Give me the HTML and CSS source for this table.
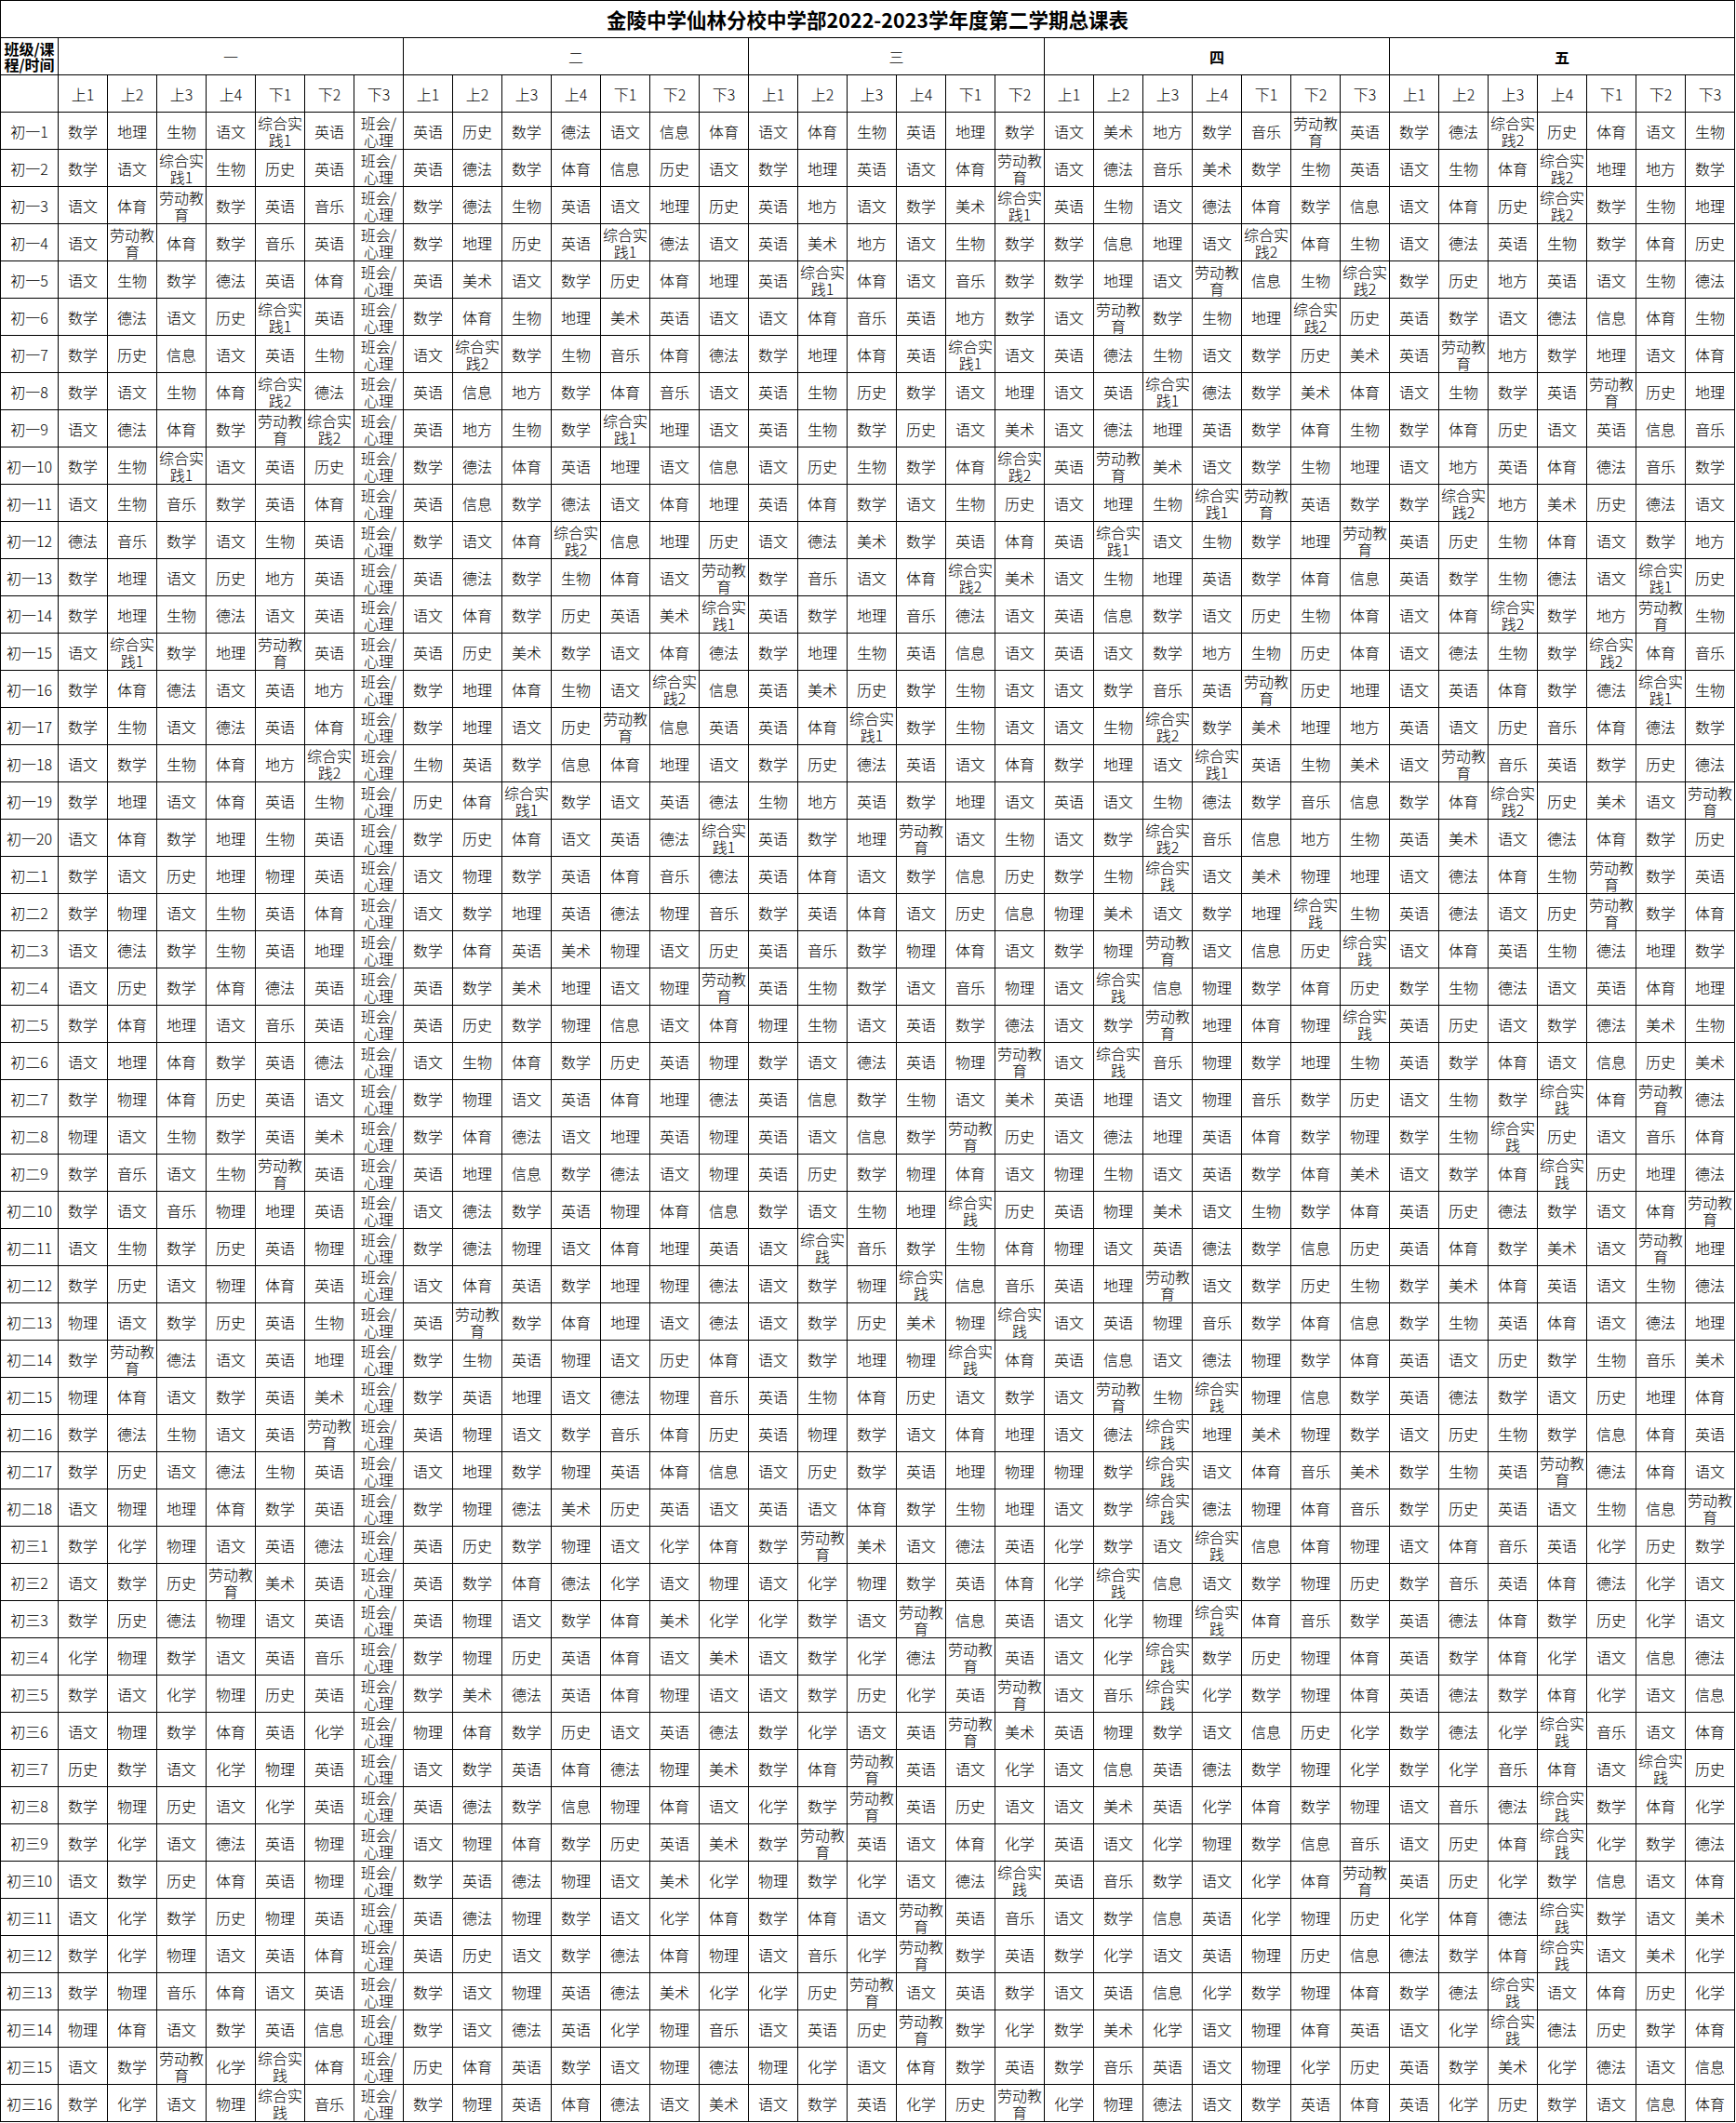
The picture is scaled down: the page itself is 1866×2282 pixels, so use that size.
FILE: index.html
```html
<!DOCTYPE html>
<html lang="zh-CN">
<head>
<meta charset="utf-8">
<title>金陵中学仙林分校中学部2022-2023学年度第二学期总课表</title>
<link rel="stylesheet" href="styles.css">
</head>
<body>
<table class="timetable">
<colgroup><col class="col-class"><col span="34" class="col-slot"></colgroup>
<tr><td colspan="35" class="title">金陵中学仙林分校中学部2022-2023学年度第二学期总课表</td></tr>
<tr><th class="corner">班级/课程/时间</th><th colspan="7" class="day">一</th><th colspan="7" class="day">二</th><th colspan="6" class="day">三</th><th colspan="7" class="day day-bold">四</th><th colspan="7" class="day day-bold">五</th></tr>
<tr><th></th><th>上1</th><th>上2</th><th>上3</th><th>上4</th><th>下1</th><th>下2</th><th>下3</th><th>上1</th><th>上2</th><th>上3</th><th>上4</th><th>下1</th><th>下2</th><th>下3</th><th>上1</th><th>上2</th><th>上3</th><th>上4</th><th>下1</th><th>下2</th><th>上1</th><th>上2</th><th>上3</th><th>上4</th><th>下1</th><th>下2</th><th>下3</th><th>上1</th><th>上2</th><th>上3</th><th>上4</th><th>下1</th><th>下2</th><th>下3</th></tr>
<tr><th>初一1</th><td>数学</td><td>地理</td><td>生物</td><td>语文</td><td>综合实践1</td><td>英语</td><td>班会/心理</td><td>英语</td><td>历史</td><td>数学</td><td>德法</td><td>语文</td><td>信息</td><td>体育</td><td>语文</td><td>体育</td><td>生物</td><td>英语</td><td>地理</td><td>数学</td><td>语文</td><td>美术</td><td>地方</td><td>数学</td><td>音乐</td><td>劳动教育</td><td>英语</td><td>数学</td><td>德法</td><td>综合实践2</td><td>历史</td><td>体育</td><td>语文</td><td>生物</td></tr>
<tr><th>初一2</th><td>数学</td><td>语文</td><td>综合实践1</td><td>生物</td><td>历史</td><td>英语</td><td>班会/心理</td><td>英语</td><td>德法</td><td>数学</td><td>体育</td><td>信息</td><td>历史</td><td>语文</td><td>数学</td><td>地理</td><td>英语</td><td>语文</td><td>体育</td><td>劳动教育</td><td>语文</td><td>德法</td><td>音乐</td><td>美术</td><td>数学</td><td>生物</td><td>英语</td><td>语文</td><td>生物</td><td>体育</td><td>综合实践2</td><td>地理</td><td>地方</td><td>数学</td></tr>
<tr><th>初一3</th><td>语文</td><td>体育</td><td>劳动教育</td><td>数学</td><td>英语</td><td>音乐</td><td>班会/心理</td><td>数学</td><td>德法</td><td>生物</td><td>英语</td><td>语文</td><td>地理</td><td>历史</td><td>英语</td><td>地方</td><td>语文</td><td>数学</td><td>美术</td><td>综合实践1</td><td>英语</td><td>生物</td><td>语文</td><td>德法</td><td>体育</td><td>数学</td><td>信息</td><td>语文</td><td>体育</td><td>历史</td><td>综合实践2</td><td>数学</td><td>生物</td><td>地理</td></tr>
<tr><th>初一4</th><td>语文</td><td>劳动教育</td><td>体育</td><td>数学</td><td>音乐</td><td>英语</td><td>班会/心理</td><td>数学</td><td>地理</td><td>历史</td><td>英语</td><td>综合实践1</td><td>德法</td><td>语文</td><td>英语</td><td>美术</td><td>地方</td><td>语文</td><td>生物</td><td>数学</td><td>数学</td><td>信息</td><td>地理</td><td>语文</td><td>综合实践2</td><td>体育</td><td>生物</td><td>语文</td><td>德法</td><td>英语</td><td>生物</td><td>数学</td><td>体育</td><td>历史</td></tr>
<tr><th>初一5</th><td>语文</td><td>生物</td><td>数学</td><td>德法</td><td>英语</td><td>体育</td><td>班会/心理</td><td>英语</td><td>美术</td><td>语文</td><td>数学</td><td>历史</td><td>体育</td><td>地理</td><td>英语</td><td>综合实践1</td><td>体育</td><td>语文</td><td>音乐</td><td>数学</td><td>数学</td><td>地理</td><td>语文</td><td>劳动教育</td><td>信息</td><td>生物</td><td>综合实践2</td><td>数学</td><td>历史</td><td>地方</td><td>英语</td><td>语文</td><td>生物</td><td>德法</td></tr>
<tr><th>初一6</th><td>数学</td><td>德法</td><td>语文</td><td>历史</td><td>综合实践1</td><td>英语</td><td>班会/心理</td><td>数学</td><td>体育</td><td>生物</td><td>地理</td><td>美术</td><td>英语</td><td>语文</td><td>语文</td><td>体育</td><td>音乐</td><td>英语</td><td>地方</td><td>数学</td><td>语文</td><td>劳动教育</td><td>数学</td><td>生物</td><td>地理</td><td>综合实践2</td><td>历史</td><td>英语</td><td>数学</td><td>语文</td><td>德法</td><td>信息</td><td>体育</td><td>生物</td></tr>
<tr><th>初一7</th><td>数学</td><td>历史</td><td>信息</td><td>语文</td><td>英语</td><td>生物</td><td>班会/心理</td><td>语文</td><td>综合实践2</td><td>数学</td><td>生物</td><td>音乐</td><td>体育</td><td>德法</td><td>数学</td><td>地理</td><td>体育</td><td>英语</td><td>综合实践1</td><td>语文</td><td>英语</td><td>德法</td><td>生物</td><td>语文</td><td>数学</td><td>历史</td><td>美术</td><td>英语</td><td>劳动教育</td><td>地方</td><td>数学</td><td>地理</td><td>语文</td><td>体育</td></tr>
<tr><th>初一8</th><td>数学</td><td>语文</td><td>生物</td><td>体育</td><td>综合实践2</td><td>德法</td><td>班会/心理</td><td>英语</td><td>信息</td><td>地方</td><td>数学</td><td>体育</td><td>音乐</td><td>语文</td><td>英语</td><td>生物</td><td>历史</td><td>数学</td><td>语文</td><td>地理</td><td>语文</td><td>英语</td><td>综合实践1</td><td>德法</td><td>数学</td><td>美术</td><td>体育</td><td>语文</td><td>生物</td><td>数学</td><td>英语</td><td>劳动教育</td><td>历史</td><td>地理</td></tr>
<tr><th>初一9</th><td>语文</td><td>德法</td><td>体育</td><td>数学</td><td>劳动教育</td><td>综合实践2</td><td>班会/心理</td><td>英语</td><td>地方</td><td>生物</td><td>数学</td><td>综合实践1</td><td>地理</td><td>语文</td><td>英语</td><td>生物</td><td>数学</td><td>历史</td><td>语文</td><td>美术</td><td>语文</td><td>德法</td><td>地理</td><td>英语</td><td>数学</td><td>体育</td><td>生物</td><td>数学</td><td>体育</td><td>历史</td><td>语文</td><td>英语</td><td>信息</td><td>音乐</td></tr>
<tr><th>初一10</th><td>数学</td><td>生物</td><td>综合实践1</td><td>语文</td><td>英语</td><td>历史</td><td>班会/心理</td><td>数学</td><td>德法</td><td>体育</td><td>英语</td><td>地理</td><td>语文</td><td>信息</td><td>语文</td><td>历史</td><td>生物</td><td>数学</td><td>体育</td><td>综合实践2</td><td>英语</td><td>劳动教育</td><td>美术</td><td>语文</td><td>数学</td><td>生物</td><td>地理</td><td>语文</td><td>地方</td><td>英语</td><td>体育</td><td>德法</td><td>音乐</td><td>数学</td></tr>
<tr><th>初一11</th><td>语文</td><td>生物</td><td>音乐</td><td>数学</td><td>英语</td><td>体育</td><td>班会/心理</td><td>英语</td><td>信息</td><td>数学</td><td>德法</td><td>语文</td><td>体育</td><td>地理</td><td>英语</td><td>体育</td><td>数学</td><td>语文</td><td>生物</td><td>历史</td><td>语文</td><td>地理</td><td>生物</td><td>综合实践1</td><td>劳动教育</td><td>英语</td><td>数学</td><td>数学</td><td>综合实践2</td><td>地方</td><td>美术</td><td>历史</td><td>德法</td><td>语文</td></tr>
<tr><th>初一12</th><td>德法</td><td>音乐</td><td>数学</td><td>语文</td><td>生物</td><td>英语</td><td>班会/心理</td><td>数学</td><td>语文</td><td>体育</td><td>综合实践2</td><td>信息</td><td>地理</td><td>历史</td><td>语文</td><td>德法</td><td>美术</td><td>数学</td><td>英语</td><td>体育</td><td>英语</td><td>综合实践1</td><td>语文</td><td>生物</td><td>数学</td><td>地理</td><td>劳动教育</td><td>英语</td><td>历史</td><td>生物</td><td>体育</td><td>语文</td><td>数学</td><td>地方</td></tr>
<tr><th>初一13</th><td>数学</td><td>地理</td><td>语文</td><td>历史</td><td>地方</td><td>英语</td><td>班会/心理</td><td>英语</td><td>德法</td><td>数学</td><td>生物</td><td>体育</td><td>语文</td><td>劳动教育</td><td>数学</td><td>音乐</td><td>语文</td><td>体育</td><td>综合实践2</td><td>美术</td><td>语文</td><td>生物</td><td>地理</td><td>英语</td><td>数学</td><td>体育</td><td>信息</td><td>英语</td><td>数学</td><td>生物</td><td>德法</td><td>语文</td><td>综合实践1</td><td>历史</td></tr>
<tr><th>初一14</th><td>数学</td><td>地理</td><td>生物</td><td>德法</td><td>语文</td><td>英语</td><td>班会/心理</td><td>语文</td><td>体育</td><td>数学</td><td>历史</td><td>英语</td><td>美术</td><td>综合实践1</td><td>英语</td><td>数学</td><td>地理</td><td>音乐</td><td>德法</td><td>语文</td><td>英语</td><td>信息</td><td>数学</td><td>语文</td><td>历史</td><td>生物</td><td>体育</td><td>语文</td><td>体育</td><td>综合实践2</td><td>数学</td><td>地方</td><td>劳动教育</td><td>生物</td></tr>
<tr><th>初一15</th><td>语文</td><td>综合实践1</td><td>数学</td><td>地理</td><td>劳动教育</td><td>英语</td><td>班会/心理</td><td>英语</td><td>历史</td><td>美术</td><td>数学</td><td>语文</td><td>体育</td><td>德法</td><td>数学</td><td>地理</td><td>生物</td><td>英语</td><td>信息</td><td>语文</td><td>英语</td><td>语文</td><td>数学</td><td>地方</td><td>生物</td><td>历史</td><td>体育</td><td>语文</td><td>德法</td><td>生物</td><td>数学</td><td>综合实践2</td><td>体育</td><td>音乐</td></tr>
<tr><th>初一16</th><td>数学</td><td>体育</td><td>德法</td><td>语文</td><td>英语</td><td>地方</td><td>班会/心理</td><td>数学</td><td>地理</td><td>体育</td><td>生物</td><td>语文</td><td>综合实践2</td><td>信息</td><td>英语</td><td>美术</td><td>历史</td><td>数学</td><td>生物</td><td>语文</td><td>语文</td><td>数学</td><td>音乐</td><td>英语</td><td>劳动教育</td><td>历史</td><td>地理</td><td>语文</td><td>英语</td><td>体育</td><td>数学</td><td>德法</td><td>综合实践1</td><td>生物</td></tr>
<tr><th>初一17</th><td>数学</td><td>生物</td><td>语文</td><td>德法</td><td>英语</td><td>体育</td><td>班会/心理</td><td>数学</td><td>地理</td><td>语文</td><td>历史</td><td>劳动教育</td><td>信息</td><td>英语</td><td>英语</td><td>体育</td><td>综合实践1</td><td>数学</td><td>生物</td><td>语文</td><td>语文</td><td>生物</td><td>综合实践2</td><td>数学</td><td>美术</td><td>地理</td><td>地方</td><td>英语</td><td>语文</td><td>历史</td><td>音乐</td><td>体育</td><td>德法</td><td>数学</td></tr>
<tr><th>初一18</th><td>语文</td><td>数学</td><td>生物</td><td>体育</td><td>地方</td><td>综合实践2</td><td>班会/心理</td><td>生物</td><td>英语</td><td>数学</td><td>信息</td><td>体育</td><td>地理</td><td>语文</td><td>数学</td><td>历史</td><td>德法</td><td>英语</td><td>语文</td><td>体育</td><td>数学</td><td>地理</td><td>语文</td><td>综合实践1</td><td>英语</td><td>生物</td><td>美术</td><td>语文</td><td>劳动教育</td><td>音乐</td><td>英语</td><td>数学</td><td>历史</td><td>德法</td></tr>
<tr><th>初一19</th><td>数学</td><td>地理</td><td>语文</td><td>体育</td><td>英语</td><td>生物</td><td>班会/心理</td><td>历史</td><td>体育</td><td>综合实践1</td><td>数学</td><td>语文</td><td>英语</td><td>德法</td><td>生物</td><td>地方</td><td>英语</td><td>数学</td><td>地理</td><td>语文</td><td>英语</td><td>语文</td><td>生物</td><td>德法</td><td>数学</td><td>音乐</td><td>信息</td><td>数学</td><td>体育</td><td>综合实践2</td><td>历史</td><td>美术</td><td>语文</td><td>劳动教育</td></tr>
<tr><th>初一20</th><td>语文</td><td>体育</td><td>数学</td><td>地理</td><td>生物</td><td>英语</td><td>班会/心理</td><td>数学</td><td>历史</td><td>体育</td><td>语文</td><td>英语</td><td>德法</td><td>综合实践1</td><td>英语</td><td>数学</td><td>地理</td><td>劳动教育</td><td>语文</td><td>生物</td><td>语文</td><td>数学</td><td>综合实践2</td><td>音乐</td><td>信息</td><td>地方</td><td>生物</td><td>英语</td><td>美术</td><td>语文</td><td>德法</td><td>体育</td><td>数学</td><td>历史</td></tr>
<tr><th>初二1</th><td>数学</td><td>语文</td><td>历史</td><td>地理</td><td>物理</td><td>英语</td><td>班会/心理</td><td>语文</td><td>物理</td><td>数学</td><td>英语</td><td>体育</td><td>音乐</td><td>德法</td><td>英语</td><td>体育</td><td>语文</td><td>数学</td><td>信息</td><td>历史</td><td>数学</td><td>生物</td><td>综合实践</td><td>语文</td><td>美术</td><td>物理</td><td>地理</td><td>语文</td><td>德法</td><td>体育</td><td>生物</td><td>劳动教育</td><td>数学</td><td>英语</td></tr>
<tr><th>初二2</th><td>数学</td><td>物理</td><td>语文</td><td>生物</td><td>英语</td><td>体育</td><td>班会/心理</td><td>语文</td><td>数学</td><td>地理</td><td>英语</td><td>德法</td><td>物理</td><td>音乐</td><td>数学</td><td>英语</td><td>体育</td><td>语文</td><td>历史</td><td>信息</td><td>物理</td><td>美术</td><td>语文</td><td>数学</td><td>地理</td><td>综合实践</td><td>生物</td><td>英语</td><td>德法</td><td>语文</td><td>历史</td><td>劳动教育</td><td>数学</td><td>体育</td></tr>
<tr><th>初二3</th><td>语文</td><td>德法</td><td>数学</td><td>生物</td><td>英语</td><td>地理</td><td>班会/心理</td><td>数学</td><td>体育</td><td>英语</td><td>美术</td><td>物理</td><td>语文</td><td>历史</td><td>英语</td><td>音乐</td><td>数学</td><td>物理</td><td>体育</td><td>语文</td><td>数学</td><td>物理</td><td>劳动教育</td><td>语文</td><td>信息</td><td>历史</td><td>综合实践</td><td>语文</td><td>体育</td><td>英语</td><td>生物</td><td>德法</td><td>地理</td><td>数学</td></tr>
<tr><th>初二4</th><td>语文</td><td>历史</td><td>数学</td><td>体育</td><td>德法</td><td>英语</td><td>班会/心理</td><td>英语</td><td>数学</td><td>美术</td><td>地理</td><td>语文</td><td>物理</td><td>劳动教育</td><td>英语</td><td>生物</td><td>数学</td><td>语文</td><td>音乐</td><td>物理</td><td>语文</td><td>综合实践</td><td>信息</td><td>物理</td><td>数学</td><td>体育</td><td>历史</td><td>数学</td><td>生物</td><td>德法</td><td>语文</td><td>英语</td><td>体育</td><td>地理</td></tr>
<tr><th>初二5</th><td>数学</td><td>体育</td><td>地理</td><td>语文</td><td>音乐</td><td>英语</td><td>班会/心理</td><td>英语</td><td>历史</td><td>数学</td><td>物理</td><td>信息</td><td>语文</td><td>体育</td><td>物理</td><td>生物</td><td>语文</td><td>英语</td><td>数学</td><td>德法</td><td>语文</td><td>数学</td><td>劳动教育</td><td>地理</td><td>体育</td><td>物理</td><td>综合实践</td><td>英语</td><td>历史</td><td>语文</td><td>数学</td><td>德法</td><td>美术</td><td>生物</td></tr>
<tr><th>初二6</th><td>语文</td><td>地理</td><td>体育</td><td>数学</td><td>英语</td><td>德法</td><td>班会/心理</td><td>语文</td><td>生物</td><td>体育</td><td>数学</td><td>历史</td><td>英语</td><td>物理</td><td>数学</td><td>语文</td><td>德法</td><td>英语</td><td>物理</td><td>劳动教育</td><td>语文</td><td>综合实践</td><td>音乐</td><td>物理</td><td>数学</td><td>地理</td><td>生物</td><td>英语</td><td>数学</td><td>体育</td><td>语文</td><td>信息</td><td>历史</td><td>美术</td></tr>
<tr><th>初二7</th><td>数学</td><td>物理</td><td>体育</td><td>历史</td><td>英语</td><td>语文</td><td>班会/心理</td><td>数学</td><td>物理</td><td>语文</td><td>英语</td><td>体育</td><td>地理</td><td>德法</td><td>英语</td><td>信息</td><td>数学</td><td>生物</td><td>语文</td><td>美术</td><td>英语</td><td>地理</td><td>语文</td><td>物理</td><td>音乐</td><td>数学</td><td>历史</td><td>语文</td><td>生物</td><td>数学</td><td>综合实践</td><td>体育</td><td>劳动教育</td><td>德法</td></tr>
<tr><th>初二8</th><td>物理</td><td>语文</td><td>生物</td><td>数学</td><td>英语</td><td>美术</td><td>班会/心理</td><td>数学</td><td>体育</td><td>德法</td><td>语文</td><td>地理</td><td>英语</td><td>物理</td><td>英语</td><td>语文</td><td>信息</td><td>数学</td><td>劳动教育</td><td>历史</td><td>语文</td><td>德法</td><td>地理</td><td>英语</td><td>体育</td><td>数学</td><td>物理</td><td>数学</td><td>生物</td><td>综合实践</td><td>历史</td><td>语文</td><td>音乐</td><td>体育</td></tr>
<tr><th>初二9</th><td>数学</td><td>音乐</td><td>语文</td><td>生物</td><td>劳动教育</td><td>英语</td><td>班会/心理</td><td>英语</td><td>地理</td><td>信息</td><td>数学</td><td>德法</td><td>语文</td><td>物理</td><td>英语</td><td>历史</td><td>数学</td><td>物理</td><td>体育</td><td>语文</td><td>物理</td><td>生物</td><td>语文</td><td>英语</td><td>数学</td><td>体育</td><td>美术</td><td>语文</td><td>数学</td><td>体育</td><td>综合实践</td><td>历史</td><td>地理</td><td>德法</td></tr>
<tr><th>初二10</th><td>数学</td><td>语文</td><td>音乐</td><td>物理</td><td>地理</td><td>英语</td><td>班会/心理</td><td>语文</td><td>德法</td><td>数学</td><td>英语</td><td>物理</td><td>体育</td><td>信息</td><td>数学</td><td>语文</td><td>生物</td><td>地理</td><td>综合实践</td><td>历史</td><td>英语</td><td>物理</td><td>美术</td><td>语文</td><td>生物</td><td>数学</td><td>体育</td><td>英语</td><td>历史</td><td>德法</td><td>数学</td><td>语文</td><td>体育</td><td>劳动教育</td></tr>
<tr><th>初二11</th><td>语文</td><td>生物</td><td>数学</td><td>历史</td><td>英语</td><td>物理</td><td>班会/心理</td><td>数学</td><td>德法</td><td>物理</td><td>语文</td><td>体育</td><td>地理</td><td>英语</td><td>语文</td><td>综合实践</td><td>音乐</td><td>数学</td><td>生物</td><td>体育</td><td>物理</td><td>语文</td><td>英语</td><td>德法</td><td>数学</td><td>信息</td><td>历史</td><td>英语</td><td>体育</td><td>数学</td><td>美术</td><td>语文</td><td>劳动教育</td><td>地理</td></tr>
<tr><th>初二12</th><td>数学</td><td>历史</td><td>语文</td><td>物理</td><td>体育</td><td>英语</td><td>班会/心理</td><td>语文</td><td>体育</td><td>英语</td><td>数学</td><td>地理</td><td>物理</td><td>德法</td><td>语文</td><td>数学</td><td>物理</td><td>综合实践</td><td>信息</td><td>音乐</td><td>英语</td><td>地理</td><td>劳动教育</td><td>语文</td><td>数学</td><td>历史</td><td>生物</td><td>数学</td><td>美术</td><td>体育</td><td>英语</td><td>语文</td><td>生物</td><td>德法</td></tr>
<tr><th>初二13</th><td>物理</td><td>语文</td><td>数学</td><td>历史</td><td>英语</td><td>生物</td><td>班会/心理</td><td>英语</td><td>劳动教育</td><td>数学</td><td>体育</td><td>地理</td><td>语文</td><td>德法</td><td>语文</td><td>数学</td><td>历史</td><td>美术</td><td>物理</td><td>综合实践</td><td>语文</td><td>英语</td><td>物理</td><td>音乐</td><td>数学</td><td>体育</td><td>信息</td><td>数学</td><td>生物</td><td>英语</td><td>体育</td><td>语文</td><td>德法</td><td>地理</td></tr>
<tr><th>初二14</th><td>数学</td><td>劳动教育</td><td>德法</td><td>语文</td><td>英语</td><td>地理</td><td>班会/心理</td><td>数学</td><td>生物</td><td>英语</td><td>物理</td><td>语文</td><td>历史</td><td>体育</td><td>语文</td><td>数学</td><td>地理</td><td>物理</td><td>综合实践</td><td>体育</td><td>英语</td><td>信息</td><td>语文</td><td>德法</td><td>物理</td><td>数学</td><td>体育</td><td>英语</td><td>语文</td><td>历史</td><td>数学</td><td>生物</td><td>音乐</td><td>美术</td></tr>
<tr><th>初二15</th><td>物理</td><td>体育</td><td>语文</td><td>数学</td><td>英语</td><td>美术</td><td>班会/心理</td><td>数学</td><td>英语</td><td>地理</td><td>语文</td><td>德法</td><td>物理</td><td>音乐</td><td>英语</td><td>生物</td><td>体育</td><td>历史</td><td>语文</td><td>数学</td><td>语文</td><td>劳动教育</td><td>生物</td><td>综合实践</td><td>物理</td><td>信息</td><td>数学</td><td>英语</td><td>德法</td><td>数学</td><td>语文</td><td>历史</td><td>地理</td><td>体育</td></tr>
<tr><th>初二16</th><td>数学</td><td>德法</td><td>生物</td><td>语文</td><td>英语</td><td>劳动教育</td><td>班会/心理</td><td>英语</td><td>物理</td><td>语文</td><td>数学</td><td>音乐</td><td>体育</td><td>历史</td><td>英语</td><td>物理</td><td>数学</td><td>语文</td><td>体育</td><td>地理</td><td>语文</td><td>德法</td><td>综合实践</td><td>地理</td><td>美术</td><td>物理</td><td>数学</td><td>语文</td><td>历史</td><td>生物</td><td>数学</td><td>信息</td><td>体育</td><td>英语</td></tr>
<tr><th>初二17</th><td>数学</td><td>历史</td><td>语文</td><td>德法</td><td>生物</td><td>英语</td><td>班会/心理</td><td>语文</td><td>地理</td><td>数学</td><td>物理</td><td>英语</td><td>体育</td><td>信息</td><td>语文</td><td>历史</td><td>数学</td><td>英语</td><td>地理</td><td>物理</td><td>物理</td><td>数学</td><td>综合实践</td><td>语文</td><td>体育</td><td>音乐</td><td>美术</td><td>数学</td><td>生物</td><td>英语</td><td>劳动教育</td><td>德法</td><td>体育</td><td>语文</td></tr>
<tr><th>初二18</th><td>语文</td><td>物理</td><td>地理</td><td>体育</td><td>数学</td><td>英语</td><td>班会/心理</td><td>数学</td><td>物理</td><td>德法</td><td>美术</td><td>历史</td><td>英语</td><td>语文</td><td>英语</td><td>语文</td><td>体育</td><td>数学</td><td>生物</td><td>地理</td><td>语文</td><td>数学</td><td>综合实践</td><td>德法</td><td>物理</td><td>体育</td><td>音乐</td><td>数学</td><td>历史</td><td>英语</td><td>语文</td><td>生物</td><td>信息</td><td>劳动教育</td></tr>
<tr><th>初三1</th><td>数学</td><td>化学</td><td>物理</td><td>语文</td><td>英语</td><td>德法</td><td>班会/心理</td><td>英语</td><td>历史</td><td>数学</td><td>物理</td><td>语文</td><td>化学</td><td>体育</td><td>数学</td><td>劳动教育</td><td>美术</td><td>语文</td><td>德法</td><td>英语</td><td>化学</td><td>数学</td><td>语文</td><td>综合实践</td><td>信息</td><td>体育</td><td>物理</td><td>语文</td><td>体育</td><td>音乐</td><td>英语</td><td>化学</td><td>历史</td><td>数学</td></tr>
<tr><th>初三2</th><td>语文</td><td>数学</td><td>历史</td><td>劳动教育</td><td>美术</td><td>英语</td><td>班会/心理</td><td>英语</td><td>数学</td><td>体育</td><td>德法</td><td>化学</td><td>语文</td><td>物理</td><td>语文</td><td>化学</td><td>物理</td><td>数学</td><td>英语</td><td>体育</td><td>化学</td><td>综合实践</td><td>信息</td><td>语文</td><td>数学</td><td>物理</td><td>历史</td><td>数学</td><td>音乐</td><td>英语</td><td>体育</td><td>德法</td><td>化学</td><td>语文</td></tr>
<tr><th>初三3</th><td>数学</td><td>历史</td><td>德法</td><td>物理</td><td>语文</td><td>英语</td><td>班会/心理</td><td>英语</td><td>物理</td><td>语文</td><td>数学</td><td>体育</td><td>美术</td><td>化学</td><td>化学</td><td>数学</td><td>语文</td><td>劳动教育</td><td>信息</td><td>英语</td><td>语文</td><td>化学</td><td>物理</td><td>综合实践</td><td>体育</td><td>音乐</td><td>数学</td><td>英语</td><td>德法</td><td>体育</td><td>数学</td><td>历史</td><td>化学</td><td>语文</td></tr>
<tr><th>初三4</th><td>化学</td><td>物理</td><td>数学</td><td>语文</td><td>英语</td><td>音乐</td><td>班会/心理</td><td>数学</td><td>物理</td><td>历史</td><td>英语</td><td>体育</td><td>语文</td><td>美术</td><td>语文</td><td>数学</td><td>化学</td><td>德法</td><td>劳动教育</td><td>英语</td><td>语文</td><td>化学</td><td>综合实践</td><td>数学</td><td>历史</td><td>物理</td><td>体育</td><td>英语</td><td>数学</td><td>体育</td><td>化学</td><td>语文</td><td>信息</td><td>德法</td></tr>
<tr><th>初三5</th><td>数学</td><td>语文</td><td>化学</td><td>物理</td><td>历史</td><td>英语</td><td>班会/心理</td><td>数学</td><td>美术</td><td>德法</td><td>英语</td><td>体育</td><td>物理</td><td>语文</td><td>语文</td><td>数学</td><td>历史</td><td>化学</td><td>英语</td><td>劳动教育</td><td>语文</td><td>音乐</td><td>综合实践</td><td>化学</td><td>数学</td><td>物理</td><td>体育</td><td>英语</td><td>德法</td><td>数学</td><td>体育</td><td>化学</td><td>语文</td><td>信息</td></tr>
<tr><th>初三6</th><td>语文</td><td>物理</td><td>数学</td><td>体育</td><td>英语</td><td>化学</td><td>班会/心理</td><td>物理</td><td>体育</td><td>数学</td><td>历史</td><td>语文</td><td>英语</td><td>德法</td><td>数学</td><td>化学</td><td>语文</td><td>英语</td><td>劳动教育</td><td>美术</td><td>英语</td><td>物理</td><td>数学</td><td>语文</td><td>信息</td><td>历史</td><td>化学</td><td>数学</td><td>德法</td><td>化学</td><td>综合实践</td><td>音乐</td><td>语文</td><td>体育</td></tr>
<tr><th>初三7</th><td>历史</td><td>数学</td><td>语文</td><td>化学</td><td>物理</td><td>英语</td><td>班会/心理</td><td>语文</td><td>数学</td><td>英语</td><td>体育</td><td>德法</td><td>物理</td><td>美术</td><td>数学</td><td>体育</td><td>劳动教育</td><td>英语</td><td>语文</td><td>化学</td><td>语文</td><td>信息</td><td>英语</td><td>德法</td><td>数学</td><td>物理</td><td>化学</td><td>数学</td><td>化学</td><td>音乐</td><td>体育</td><td>语文</td><td>综合实践</td><td>历史</td></tr>
<tr><th>初三8</th><td>数学</td><td>物理</td><td>历史</td><td>语文</td><td>化学</td><td>英语</td><td>班会/心理</td><td>英语</td><td>德法</td><td>数学</td><td>信息</td><td>物理</td><td>体育</td><td>语文</td><td>化学</td><td>数学</td><td>劳动教育</td><td>英语</td><td>历史</td><td>语文</td><td>语文</td><td>美术</td><td>英语</td><td>化学</td><td>体育</td><td>数学</td><td>物理</td><td>语文</td><td>音乐</td><td>德法</td><td>综合实践</td><td>数学</td><td>体育</td><td>化学</td></tr>
<tr><th>初三9</th><td>数学</td><td>化学</td><td>语文</td><td>德法</td><td>英语</td><td>物理</td><td>班会/心理</td><td>语文</td><td>物理</td><td>体育</td><td>数学</td><td>历史</td><td>英语</td><td>美术</td><td>数学</td><td>劳动教育</td><td>英语</td><td>语文</td><td>体育</td><td>化学</td><td>英语</td><td>语文</td><td>化学</td><td>物理</td><td>数学</td><td>信息</td><td>音乐</td><td>语文</td><td>历史</td><td>体育</td><td>综合实践</td><td>化学</td><td>数学</td><td>德法</td></tr>
<tr><th>初三10</th><td>语文</td><td>数学</td><td>历史</td><td>体育</td><td>英语</td><td>物理</td><td>班会/心理</td><td>数学</td><td>英语</td><td>德法</td><td>物理</td><td>语文</td><td>美术</td><td>化学</td><td>物理</td><td>数学</td><td>化学</td><td>语文</td><td>德法</td><td>综合实践</td><td>英语</td><td>音乐</td><td>数学</td><td>语文</td><td>化学</td><td>体育</td><td>劳动教育</td><td>英语</td><td>历史</td><td>化学</td><td>数学</td><td>信息</td><td>语文</td><td>体育</td></tr>
<tr><th>初三11</th><td>语文</td><td>化学</td><td>数学</td><td>历史</td><td>物理</td><td>英语</td><td>班会/心理</td><td>英语</td><td>德法</td><td>物理</td><td>数学</td><td>语文</td><td>化学</td><td>体育</td><td>数学</td><td>体育</td><td>语文</td><td>劳动教育</td><td>英语</td><td>音乐</td><td>语文</td><td>数学</td><td>信息</td><td>英语</td><td>化学</td><td>物理</td><td>历史</td><td>化学</td><td>体育</td><td>德法</td><td>综合实践</td><td>数学</td><td>语文</td><td>美术</td></tr>
<tr><th>初三12</th><td>数学</td><td>化学</td><td>物理</td><td>语文</td><td>英语</td><td>体育</td><td>班会/心理</td><td>英语</td><td>历史</td><td>语文</td><td>数学</td><td>德法</td><td>体育</td><td>物理</td><td>语文</td><td>音乐</td><td>化学</td><td>劳动教育</td><td>数学</td><td>英语</td><td>数学</td><td>化学</td><td>语文</td><td>英语</td><td>物理</td><td>历史</td><td>信息</td><td>德法</td><td>数学</td><td>体育</td><td>综合实践</td><td>语文</td><td>美术</td><td>化学</td></tr>
<tr><th>初三13</th><td>数学</td><td>物理</td><td>音乐</td><td>体育</td><td>语文</td><td>英语</td><td>班会/心理</td><td>数学</td><td>语文</td><td>物理</td><td>英语</td><td>德法</td><td>美术</td><td>化学</td><td>化学</td><td>历史</td><td>劳动教育</td><td>语文</td><td>英语</td><td>数学</td><td>语文</td><td>英语</td><td>信息</td><td>化学</td><td>数学</td><td>物理</td><td>体育</td><td>数学</td><td>德法</td><td>综合实践</td><td>语文</td><td>体育</td><td>历史</td><td>化学</td></tr>
<tr><th>初三14</th><td>物理</td><td>体育</td><td>语文</td><td>数学</td><td>英语</td><td>信息</td><td>班会/心理</td><td>数学</td><td>语文</td><td>德法</td><td>英语</td><td>化学</td><td>物理</td><td>音乐</td><td>语文</td><td>英语</td><td>历史</td><td>劳动教育</td><td>数学</td><td>化学</td><td>数学</td><td>美术</td><td>化学</td><td>语文</td><td>物理</td><td>体育</td><td>英语</td><td>语文</td><td>化学</td><td>综合实践</td><td>德法</td><td>历史</td><td>数学</td><td>体育</td></tr>
<tr><th>初三15</th><td>语文</td><td>数学</td><td>劳动教育</td><td>化学</td><td>综合实践</td><td>体育</td><td>班会/心理</td><td>历史</td><td>体育</td><td>英语</td><td>数学</td><td>语文</td><td>物理</td><td>德法</td><td>物理</td><td>化学</td><td>语文</td><td>体育</td><td>数学</td><td>英语</td><td>数学</td><td>音乐</td><td>英语</td><td>语文</td><td>物理</td><td>化学</td><td>历史</td><td>英语</td><td>数学</td><td>美术</td><td>化学</td><td>德法</td><td>语文</td><td>信息</td></tr>
<tr><th>初三16</th><td>数学</td><td>化学</td><td>语文</td><td>物理</td><td>综合实践</td><td>音乐</td><td>班会/心理</td><td>数学</td><td>物理</td><td>英语</td><td>体育</td><td>德法</td><td>语文</td><td>美术</td><td>语文</td><td>数学</td><td>英语</td><td>化学</td><td>历史</td><td>劳动教育</td><td>化学</td><td>物理</td><td>德法</td><td>语文</td><td>数学</td><td>英语</td><td>体育</td><td>英语</td><td>化学</td><td>历史</td><td>数学</td><td>语文</td><td>信息</td><td>体育</td></tr>
</table>
</body>
</html>
```

FILE: styles.css
```css
html,
body {
  margin: 0;
  padding: 0;
  background: #fff;
}

body {
  font-family: "Noto Sans CJK SC", "Liberation Sans", sans-serif;
  color: #000;
}

.timetable {
  border-collapse: collapse;
  table-layout: fixed;
  width: 1865px;
}

.col-class {
  width: 62px;
}

.col-slot {
  width: 53px;
}

.timetable tr {
  height: 40px;
}

.timetable th,
.timetable td {
  border: 1px solid #000;
  padding: 0 1px;
  text-align: center;
  vertical-align: middle;
  font-size: 16px;
  line-height: 18px;
  font-weight: 300;
}

.timetable .title {
  font-size: 21.5px;
  line-height: 26px;
  font-weight: 700;
}

.timetable .corner {
  font-weight: 700;
  line-height: 17px;
}

.timetable .day-bold {
  font-weight: 700;
}
```
